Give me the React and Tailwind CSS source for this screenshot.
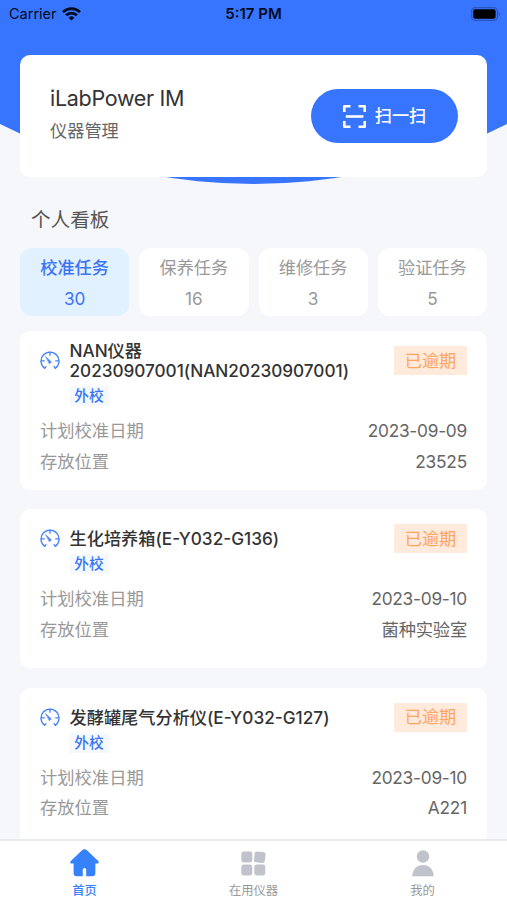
import { useState } from "react";

const tabs = [
  { label: "校准任务", count: 30 },
  { label: "保养任务", count: 16 },
  { label: "维修任务", count: 3 },
  { label: "验证任务", count: 5 },
];

const tasks = [
  {
    lines: ["NAN仪器", "20230907001(NAN20230907001)"],
    date: "2023-09-09",
    place: "23525",
  },
  { lines: ["生化培养箱(E-Y032-G136)"], date: "2023-09-10", place: "菌种实验室" },
  { lines: ["发酵罐尾气分析仪(E-Y032-G127)"], date: "2023-09-10", place: "A221" },
];

function WifiIcon() {
  return (
    <svg width="19" height="14" viewBox="0 0 19 14" fill="none" stroke="#020a1c" strokeWidth="2.7">
      <path d="M1 5.1a12.2 12.2 0 0 1 17 0" />
      <path d="M4.1 8.3a7.8 7.8 0 0 1 10.8 0" />
      <path d="M9.5 13.6 6.6 10.7a4.1 4.1 0 0 1 5.8 0Z" fill="#020a1c" stroke="none" />
    </svg>
  );
}

function BatteryIcon() {
  return (
    <svg width="30" height="14" viewBox="0 0 30 14">
      <rect x="0.6" y="0.6" width="25.8" height="12.8" rx="3.6" fill="none" stroke="#2a55bd" strokeWidth="1.2" />
      <rect x="2.2" y="2.2" width="22.4" height="9.6" rx="2" fill="#000" />
      <path d="M27.6 5v4.2c1.6-.6 1.6-3.6 0-4.2Z" fill="#2a55bd" />
    </svg>
  );
}

function ScanIcon() {
  return (
    <svg width="23" height="23" viewBox="0 0 23 23" fill="none" stroke="#fff" strokeWidth="2.6" strokeLinejoin="round">
      <path d="M1.3 7V1.3H7.5M15.5 1.3h6.2V7M21.7 16v5.7h-6.2M7.5 21.7H1.3V16" />
      <path d="M2.8 11.5h17.6" />
    </svg>
  );
}

function GaugeIcon() {
  return (
    <svg width="20" height="20" viewBox="0 0 20 20" fill="none" stroke="#4680f5" strokeWidth="1.3" strokeLinecap="round">
      <path d="M4.6 17.3a9 9 0 1 1 10.8 0" />
      <path d="M10 1.2v3M1.3 9.8h3M15.7 9.8h3" />
      <path d="M4.6 17.3l1.3-1.7M15.4 17.3l-1.3-1.7" />
      <path d="M5.8 5.8l5.6 5.2-1.8 1.6Z" fill="#4680f5" strokeWidth="0.6" />
    </svg>
  );
}

function HomeIcon() {
  return (
    <svg width="29" height="28" viewBox="0 0 29 28" fill="#3681fc">
      <path d="M11.8 1.5a4 4 0 0 1 5.4 0L28.2 11.9c1.2 1.2.6 2.7-1 2.7H25.4v9.4a3.2 3.2 0 0 1-3.2 3.2H16.2v-6.6a1.7 1.7 0 0 0-3.4 0v6.6H6.8a3.2 3.2 0 0 1-3.2-3.2v-9.4H1.8c-1.6 0-2.2-1.5-1-2.7Z" />
    </svg>
  );
}

function GridIcon() {
  return (
    <svg width="25" height="25" viewBox="0 0 25 25" fill="#c0c3cb">
      <rect x="0.3" y="0.5" width="11" height="11" rx="2.4" />
      <rect x="13.3" y="0.7" width="11" height="11" rx="2.4" transform="rotate(6 18.8 6)" />
      <rect x="0.3" y="13.5" width="11" height="11" rx="2.4" />
      <rect x="13.3" y="13.5" width="11" height="11" rx="2.4" />
    </svg>
  );
}

function UserIcon() {
  return (
    <svg width="22" height="27" viewBox="0 0 22 27" fill="#c0c3cb">
      <circle cx="11" cy="6.5" r="6.2" />
      <path d="M.3 26.2C.3 19.6 5 15 11 15s10.7 4.6 10.7 11.2Z" />
    </svg>
  );
}

function TaskCard({ task }) {
  return (
    <div className="h-[159px] shrink-0 rounded-[10px] bg-white px-5 pt-[10px]">
      <div className="flex justify-between">
        <div className="flex">
          <div className="mt-[10px] h-5 w-[29.5px]">
            <GaugeIcon />
          </div>
          <div
            className={
              "text-[17.2px] leading-5 font-medium text-[#333] " +
              (task.lines.length > 1 ? "tracking-[-0.03px]" : "pt-[10px]")
            }
          >
            {task.lines.map((line) => (
              <div key={line} className="whitespace-nowrap">
                {line}
              </div>
            ))}
            <div className="mt-[5px] flex h-5 w-[39px] items-center justify-center bg-[#f5f8fd] text-[14.7px] text-[#3975f6]">
              外校
            </div>
          </div>
        </div>
        <div className="mt-[5px] flex h-[29px] w-[73px] items-center justify-center bg-[#ffeadb] text-[17.2px] text-[#fda561]">
          已逾期
        </div>
      </div>
      <div className="mt-[10px] flex flex-col text-[17.3px] leading-[30.5px]">
        <div className="flex justify-between">
          <span className="text-[#999]">计划校准日期</span>
          <span className="tracking-[-0.25px] text-[#666]">{task.date}</span>
        </div>
        <div className="flex justify-between">
          <span className="text-[#999]">存放位置</span>
          <span className="tracking-[-0.2px] text-[#666]">{task.place}</span>
        </div>
      </div>
    </div>
  );
}

export default function App() {
  const [active, setActive] = useState(0);

  return (
    <div className="flex h-[900px] w-full flex-col overflow-hidden bg-[#f5f7fb] font-[Inter,'Noto_Sans_CJK_SC',sans-serif]">
      {/* Header */}
      <header className="h-[184px] shrink-0 bg-[#3875ff] [clip-path:circle(566px_at_50%_-382px)]">
        <div className="grid h-[27px] grid-cols-3 items-center pr-[6px] pl-[9px] text-[14.5px] text-[#020a1c]">
          <div className="flex items-center gap-[5px]">
            <span>Carrier</span>
            <WifiIcon />
          </div>
          <span className="pt-px pr-[3px] text-center text-[15px] font-semibold">5:17 PM</span>
          <div className="flex justify-end">
            <BatteryIcon />
          </div>
        </div>
      </header>

      <main className="relative -mt-[129px] flex min-h-0 flex-1 flex-col overflow-hidden px-5">
        <div className="flex h-[122px] shrink-0 items-center justify-between rounded-[10px] bg-white pr-[29px] pl-[30px]">
          <div className="pb-[7px]">
            <h1 className="text-[21.5px] leading-[30px] tracking-[-0.3px] text-[#333]">iLabPower IM</h1>
            <p className="mt-[6px] text-[17.2px] leading-6 text-[#666]">仪器管理</p>
          </div>
          <button className="flex h-[54px] w-[147px] items-center justify-center gap-[9px] rounded-full bg-[#3875ff] text-[17.2px] font-medium text-white">
            <ScanIcon />
            扫一扫
          </button>
        </div>

        <h2 className="mt-[28px] pl-[11px] text-[19.6px] leading-[30px] text-[#555]">个人看板</h2>

        <div className="mt-[13px] grid shrink-0 grid-cols-4 gap-[10px]">
          {tabs.map((tab, i) => (
            <button
              key={tab.label}
              onClick={() => setActive(i)}
              className={
                "flex h-[68px] flex-col items-center rounded-[12px] pt-[5px] text-[17.2px] leading-[30px] " +
                (active === i ? "bg-[#e1f1ff] text-[#3d74f2]" : "bg-white text-[#999]")
              }
            >
              <span className={active === i ? "font-medium" : ""}>{tab.label}</span>
              <span className="pt-px">{tab.count}</span>
            </button>
          ))}
        </div>

        <div className="mt-[15px] flex flex-col gap-[19.4px]">
          {tasks.map((task) => (
            <TaskCard key={task.lines[0]} task={task} />
          ))}
        </div>
      </main>

      {/* Bottom nav */}
      <nav className="relative grid h-[61px] shrink-0 grid-cols-3 border-t-2 border-[#e8e9ec] bg-white text-[12.3px] text-[#999]">
        <div className="flex flex-col items-center font-medium text-[#3681fc]">
          <div className="flex h-[38px] items-end pb-[2px]">
            <HomeIcon />
          </div>
          <span className="mt-[3px] leading-[18px]">首页</span>
        </div>
        <div className="flex flex-col items-center">
          <div className="flex h-[38px] items-end pb-[3px]">
            <GridIcon />
          </div>
          <span className="mt-[3px] leading-[18px]">在用仪器</span>
        </div>
        <div className="flex flex-col items-center">
          <div className="flex h-[38px] items-end pb-[2px]">
            <UserIcon />
          </div>
          <span className="mt-[3px] leading-[18px]">我的</span>
        </div>
      </nav>
    </div>
  );
}
